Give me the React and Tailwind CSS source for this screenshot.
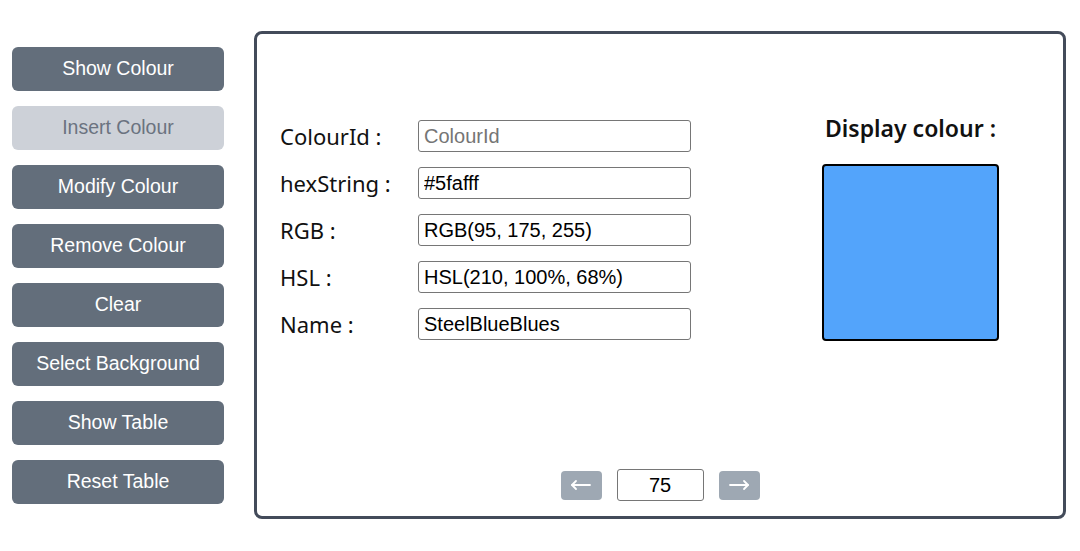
import React from "react";

const buttons = [
  { label: "Show Colour" },
  { label: "Insert Colour", disabled: true },
  { label: "Modify Colour" },
  { label: "Remove Colour" },
  { label: "Clear" },
  { label: "Select Background" },
  { label: "Show Table" },
  { label: "Reset Table" },
];

const fields = [
  { label: "ColourId :", value: "", placeholder: "ColourId" },
  { label: "hexString :", value: "#5fafff" },
  { label: "RGB :", value: "RGB(95, 175, 255)" },
  { label: "HSL :", value: "HSL(210, 100%, 68%)" },
  { label: "Name :", value: "SteelBlueBlues" },
];

function Arrow({ dir }) {
  return (
    <svg width="22" height="12" viewBox="0 0 22 12" fill="none" stroke="white" strokeWidth="1.8" strokeLinecap="round" strokeLinejoin="round">
      {dir === "left" ? (
        <>
          <path d="M2 6 H20" />
          <path d="M6 2 L2 6 L6 10" />
        </>
      ) : (
        <>
          <path d="M2 6 H20" />
          <path d="M16 2 L20 6 L16 10" />
        </>
      )}
    </svg>
  );
}

export default function App() {
  return (
    <div className="flex w-[1080px] h-[551px] bg-white" style={{ fontFamily: '"Liberation Sans", Arial, sans-serif' }}>
      <div className="flex flex-col gap-[15px] pl-3 pt-[47px] w-[224px] shrink-0">
        {buttons.map((b) =>
          b.disabled ? (
            <button
              key={b.label}
              className="w-[212px] h-[44px] rounded-md bg-[#cdd1d8] text-[#6b7380] text-[19.5px] font-['Liberation_Sans',Arial,sans-serif]"
            >
              {b.label}
            </button>
          ) : (
            <button
              key={b.label}
              className="w-[212px] h-[44px] rounded-md bg-[#636e7b] text-white text-[19.5px] font-['Liberation_Sans',Arial,sans-serif]"
            >
              {b.label}
            </button>
          )
        )}
      </div>
      <div className="ml-[30px] mt-[31px] w-[812px] h-[488px] border-[3px] border-[#434b5a] rounded-lg flex flex-col shrink-0">
        <div className="flex items-start pt-[80px] pl-[23px]">
          <div className="flex flex-col gap-[15px] mt-[6px]">
            {fields.map((f) => (
              <div key={f.label} className="flex items-center h-[32px]">
                <div className="w-[138px] text-[22px] text-[#111] font-['Noto_Sans',sans-serif]">{f.label}</div>
                <input
                  readOnly
                  value={f.value}
                  placeholder={f.placeholder}
                  className="w-[273px] h-[32px] border border-[#767676] rounded-[3px] px-[5px] text-[20px] text-black placeholder:text-[#757575] font-['Liberation_Sans',Arial,sans-serif] outline-none"
                />
              </div>
            ))}
          </div>
          <div className="ml-[131px] w-[177px] flex flex-col items-center">
            <div className="text-[23px] font-semibold text-[#111] leading-[28px] font-['Noto_Sans',sans-serif] whitespace-nowrap">
              Display colour :
            </div>
            <div className="mt-[22px] w-[177px] h-[177px] border-2 border-black rounded-[4px] bg-[#53a4fb]" />
          </div>
        </div>
        <div className="mt-auto pb-[15px] flex items-center justify-center gap-[15px]">
          <button className="w-[41px] h-[29px] rounded-[4px] bg-[#9ea8b3] flex items-center justify-center">
            <Arrow dir="left" />
          </button>
          <input
            readOnly
            value="75"
            className="w-[87px] h-[32px] border border-[#767676] rounded-[3px] text-center text-[20px] text-black outline-none font-['Liberation_Sans',Arial,sans-serif]"
          />
          <button className="w-[41px] h-[29px] rounded-[4px] bg-[#9ea8b3] flex items-center justify-center">
            <Arrow dir="right" />
          </button>
        </div>
      </div>
    </div>
  );
}
